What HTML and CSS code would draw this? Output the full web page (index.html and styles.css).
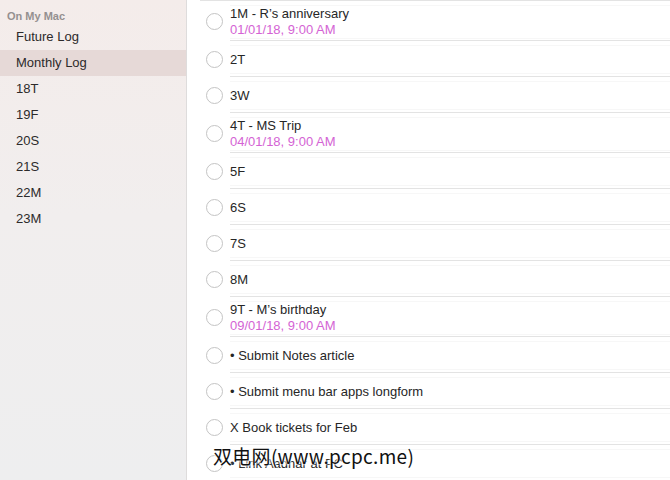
FILE: index.html
```html
<!DOCTYPE html>
<html>
<head>
<meta charset="utf-8">
<link rel="stylesheet" href="styles.css">
</head>
<body>
<div class="app">
  <aside class="sidebar">
    <div class="sb-head">On My Mac</div>
    <div class="sb-item">Future Log</div>
    <div class="sb-item selected">Monthly Log</div>
    <div class="sb-item">18T</div>
    <div class="sb-item">19F</div>
    <div class="sb-item">20S</div>
    <div class="sb-item">21S</div>
    <div class="sb-item">22M</div>
    <div class="sb-item">23M</div>
  </aside>
  <main class="list">
    <div class="topline"></div>
    <div class="row two"><span class="check"></span><div class="content"><div class="cell"><div class="title">1M - R’s anniversary</div><div class="date">01/01/18, 9:00 AM</div></div></div></div>
    <div class="row"><span class="check"></span><div class="content"><div class="cell"><div class="title">2T</div></div></div></div>
    <div class="row"><span class="check"></span><div class="content"><div class="cell"><div class="title">3W</div></div></div></div>
    <div class="row two"><span class="check"></span><div class="content"><div class="cell"><div class="title">4T - MS Trip</div><div class="date">04/01/18, 9:00 AM</div></div></div></div>
    <div class="row"><span class="check"></span><div class="content"><div class="cell"><div class="title">5F</div></div></div></div>
    <div class="row"><span class="check"></span><div class="content"><div class="cell"><div class="title">6S</div></div></div></div>
    <div class="row"><span class="check"></span><div class="content"><div class="cell"><div class="title">7S</div></div></div></div>
    <div class="row"><span class="check"></span><div class="content"><div class="cell"><div class="title">8M</div></div></div></div>
    <div class="row two"><span class="check"></span><div class="content"><div class="cell"><div class="title">9T - M’s birthday</div><div class="date">09/01/18, 9:00 AM</div></div></div></div>
    <div class="row"><span class="check"></span><div class="content"><div class="cell"><div class="title">• Submit Notes article</div></div></div></div>
    <div class="row"><span class="check"></span><div class="content"><div class="cell"><div class="title">• Submit menu bar apps longform</div></div></div></div>
    <div class="row"><span class="check"></span><div class="content"><div class="cell"><div class="title">X Book tickets for Feb</div></div></div></div>
    <div class="row"><span class="check"></span><div class="content"><div class="cell"><div class="title">• Link Aadhar at PC</div></div></div></div>
    <div class="watermark">双电网(www.pcpc.me)</div>
  </main>
</div>
</body>
</html>
```
FILE: styles.css
```css
html, body {
  margin: 0;
  padding: 0;
  height: 100%;
  overflow: hidden;
  background: #fff;
}
body {
  font-family: "Liberation Sans", Arial, sans-serif;
  font-size: 13px;
  color: #262626;
}
.app {
  display: flex;
  height: 480px;
}
.sidebar {
  width: 186px;
  flex: none;
  border-right: 1px solid #dedcdc;
  background: linear-gradient(180deg, #f4ecea 0%, #f1eeee 45%, #eeeeef 100%);
}
.sb-head {
  padding: 8px 0 0 7px;
  height: 16px;
  line-height: 16px;
  font-size: 11px;
  font-weight: bold;
  color: #949090;
}
.sb-item {
  height: 26px;
  line-height: 26px;
  padding-left: 16px;
  color: #2c2a2a;
}
.sb-item.selected {
  background: #e6d9d7;
}
.list {
  flex: 1;
  position: relative;
  overflow: hidden;
}
.topline {
  height: 0;
  border-top: 1px solid #e3e3e3;
  margin-left: 13px;
}
.row {
  display: flex;
  align-items: center;
  height: 36px;
}
.row.two {
  height: 40px;
}
.check {
  flex: none;
  width: 15px;
  height: 15px;
  border: 1px solid #c4c4c4;
  border-radius: 50%;
  margin-left: 19px;
  margin-right: 7px;
  background: #fff;
}
.content {
  flex: 1;
  align-self: stretch;
  display: flex;
  flex-direction: column;
  border-bottom: 1px solid #e3e3e3;
}
.cell {
  flex: 1;
  margin: 4px 0 2px;
  border-top: 1px solid #f7f7f7;
  border-bottom: 1px solid #f7f7f7;
  display: flex;
  flex-direction: column;
  justify-content: center;
}
.title {
  line-height: 16px;
}
.date {
  line-height: 16px;
  color: #d463d4;
}
.watermark {
  position: absolute;
  left: 26px;
  top: 444px;
  font-family: "Noto Sans CJK SC", sans-serif;
  font-size: 19px;
  line-height: 24px;
  letter-spacing: 0.3px;
  color: #111;
  text-shadow: 0 0 2px #fff, 0 0 2px #fff, 0 0 3px #fff;
  white-space: nowrap;
}
```
